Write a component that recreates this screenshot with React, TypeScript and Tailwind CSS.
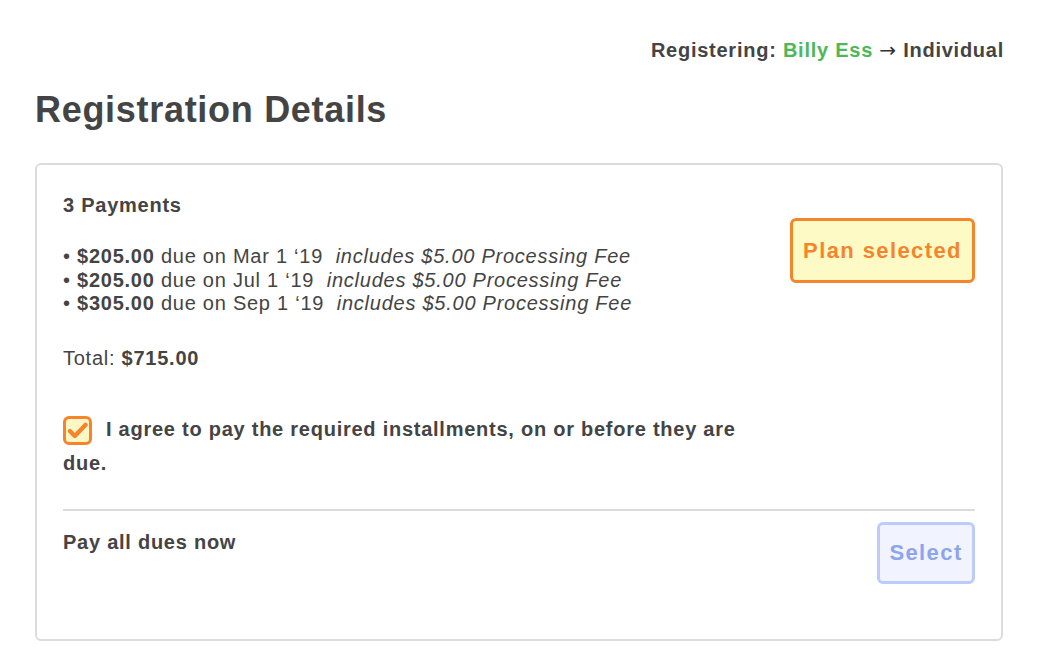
import React, { useState } from 'react';

const payments = [
  { amount: '$205.00', date: 'Mar 1 ‘19' },
  { amount: '$205.00', date: 'Jul 1 ‘19' },
  { amount: '$305.00', date: 'Sep 1 ‘19' },
];

const CheckMark: React.FC = () => (
  <svg viewBox="0 0 24 24" className="w-[23px] h-[23px]" fill="none">
    <path d="M4 12.5l5.2 5.2L20.5 6" stroke="#f5842b" strokeWidth="4.5" strokeLinecap="round" strokeLinejoin="round" />
  </svg>
);

const App: React.FC = () => {
  const [agreed, setAgreed] = useState(true);

  return (
    <div className="min-h-[664px] bg-white text-[#444] font-['Liberation_Sans',Arial,sans-serif]">
      <div className="pt-[38px] pr-[42px] text-right text-[20px] leading-[24px] font-bold tracking-[0.75px]">
        Registering: <span className="text-[#4cb858]">Billy Ess</span>{' '}
        <span className="font-normal font-['DejaVu_Sans',sans-serif] text-[#333]">→</span> Individual
      </div>

      <h1 className="mt-[26px] ml-[35px] text-[36px] leading-[44px] font-bold tracking-[0.7px]">Registration Details</h1>

      <div className="mt-[31px] ml-[35px] mr-[43px] border-2 border-[#dcdcdc] rounded-[6px] px-[26px] pt-[28px] pb-[55px] text-[20px] tracking-[0.75px]">
        <div className="flex justify-between items-start">
          <div className="w-[690px]">
            <div className="font-bold leading-[24px]">3 Payments</div>
            <ul className="mt-[28px] leading-[23.5px]">
              {payments.map((p, i) => (
                <li key={i}>
                  • <b>{p.amount}</b> due on {p.date}&nbsp; <i>includes $5.00 Processing Fee</i>
                </li>
              ))}
            </ul>
            <div className="mt-[30px] leading-[24px]">
              Total: <b>$715.00</b>
            </div>
            <div className="mt-[42px] leading-[34px] font-bold">
              <button
                onClick={() => setAgreed(!agreed)}
                className="inline-flex align-[-6px] items-center justify-center w-[29px] h-[29px] border-[3px] border-[#f5842b] rounded-[6px] bg-[#fdf7c6] mr-[14px]"
              >
                {agreed && <CheckMark />}
              </button>
              I agree to pay the required installments, on or before they are due.
            </div>
          </div>
          <button className="mt-[25px] w-[185px] h-[65px] border-[3px] border-[#f5852b] rounded-[6px] bg-[#fefac6] text-[#f5852b] font-bold text-[22px] tracking-[1.4px]">
            Plan selected
          </button>
        </div>

        <div className="mt-[29px] border-t-2 border-[#dcdcdc] pt-[11px] flex justify-between items-start">
          <div className="mt-[8px] font-bold leading-[24px]">Pay all dues now</div>
          <button className="w-[98px] h-[62px] border-[3px] border-[#bccbfa] rounded-[6px] bg-[#f1f4fe] text-[#8ea4ec] font-bold text-[22px] tracking-[1.4px]">
            Select
          </button>
        </div>
      </div>
    </div>
  );
};

export default App;
